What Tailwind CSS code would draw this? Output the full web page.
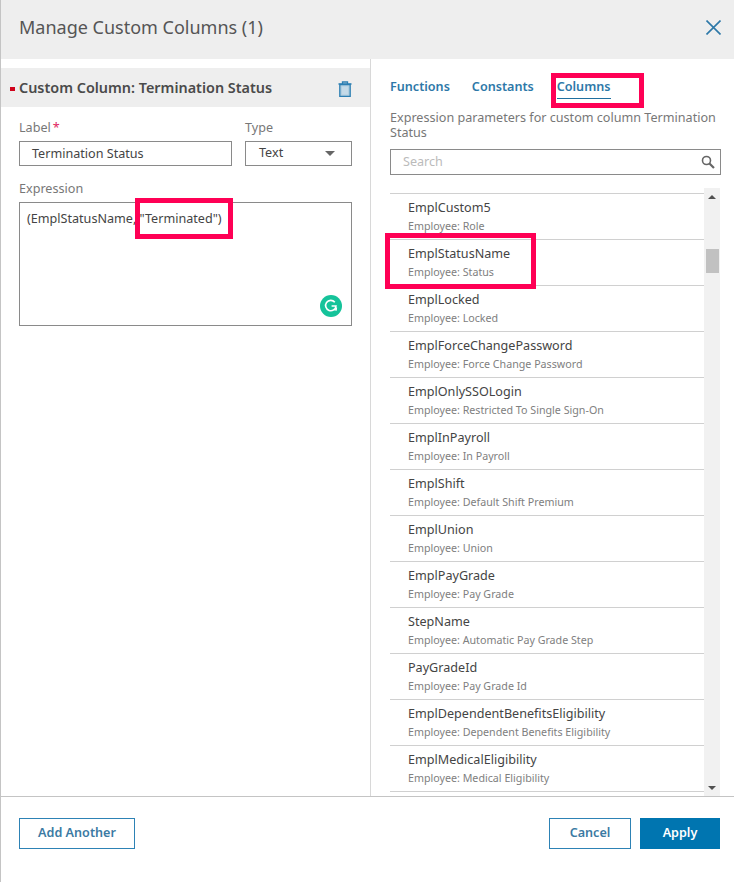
<!DOCTYPE html>
<html lang="en">
<head>
<meta charset="UTF-8" />
<title>Manage Custom Columns</title>
<script src="https://cdn.jsdelivr.net/npm/@tailwindcss/browser@4"></script>
</head>
<body class="bg-white">
<div class="relative w-[734px] h-[882px] overflow-hidden border-l border-[#c4c4c4] font-['Noto_Sans','Open_Sans',sans-serif] text-[#444]">

  <!-- header -->
  <div class="h-[59px] bg-[#eeeeee] flex items-center justify-between pl-[18px] pr-[13px]">
    <h1 class="text-[18px] leading-[24px] text-[#555] mb-[5px]">Manage Custom Columns (1)</h1>
    <svg class="w-[15px] h-[15px] mb-[4px]" viewBox="0 0 15 15" fill="none" stroke="#2d78a8" stroke-width="1.6"><path d="M.5.5l14 14M14.5.5l-14 14"/></svg>
  </div>

  <div class="flex h-[738px] border-b border-[#c4c4c4]">
    <!-- left panel -->
    <div class="w-[370px] shrink-0 border-r border-[#d8d8d8] pt-[9px]">
      <div class="relative h-[39px] bg-[#eeeeee] flex items-center justify-between pl-[18px] pr-[18px]">
        <span class="absolute left-[9px] top-[19px] w-[5px] h-[4px] bg-[#d0021b]"></span>
        <span class="text-[14.4px] font-semibold text-[#4a4a4a]">Custom Column: Termination Status</span>
        <svg class="w-[14px] h-[16px] mt-[3px]" viewBox="0 0 14 16" fill="none" stroke="#2d7fb3" stroke-width="1.3"><path d="M.5 3h13M4.5 3V1h5v2"/><path d="M1.8 3.5v11.8h10.4V3.5z" fill="#b3cfe0"/><path d="M5 5.5v8M7 5.5v8M9 5.5v8" stroke="#dbe8f0" stroke-width=".9"/></svg>
      </div>
      <div class="pl-[18px] pr-[18px]">
        <div class="flex gap-[13px] pt-[12px]">
          <div class="w-[213px]">
            <div class="text-[12.6px] leading-[18px] text-[#777] mb-[4px]">Label<span class="text-[#e0245e] ml-[2px]">*</span></div>
            <div class="h-[25px] border border-[#8a8a8a] pl-[12px] text-[12.6px] leading-[23px] text-[#444]">Termination Status</div>
          </div>
          <div class="w-[107px]">
            <div class="text-[12.6px] leading-[18px] text-[#777] mb-[4px]">Type</div>
            <div class="h-[25px] border border-[#8a8a8a] pl-[13px] pr-[16px] flex items-center justify-between text-[12.6px] text-[#444]">
              <span>Text</span>
              <span class="w-0 h-0 border-x-[5px] border-x-transparent border-t-[5px] border-t-[#666]"></span>
            </div>
          </div>
        </div>
        <div class="text-[12.6px] leading-[18px] text-[#777] mt-[14px] mb-[4px]">Expression</div>
        <div class="relative h-[124px] border border-[#8a8a8a] pl-[7px] pt-[6px] text-[12.6px] leading-[20px] text-[#444]">
          (EmplStatusName, "Terminated")
          <span class="absolute right-[9px] bottom-[8px] w-[22px] h-[22px] rounded-full bg-[#15c39a] flex items-center justify-center">
            <svg class="w-[14px] h-[14px]" viewBox="0 0 14 14" fill="none" stroke="#fff" stroke-width="1.6"><path d="M10.8 3.2A5.2 5.2 0 1 0 12 7H7.6"/><path d="M9.8 10.6l2.4.4.3-2.6" stroke-width="1.3"/></svg>
          </span>
        </div>
      </div>
    </div>

    <!-- right panel -->
    <div class="flex-1 min-w-0 pl-[19px] pr-[13px] flex flex-col">
      <div class="flex gap-[22px] pt-[19px] text-[12.6px] leading-[18px] font-semibold text-[#2d78a8]">
        <span>Functions</span>
        <span>Constants</span>
        <span class="ml-[1px] border-b border-[#1f6f9f] h-[21px]">Columns</span>
      </div>
      <p class="mt-[11px] text-[12.6px] leading-[15px] text-[#777]">Expression parameters for custom column Termination Status</p>
      <div class="mt-[9px] h-[26px] border border-[#8a8a8a] flex items-center justify-between pl-[12px] pr-[5px] text-[12.6px] text-[#bbb]">
        <span>Search</span>
        <svg class="w-[14px] h-[14px]" viewBox="0 0 14 14" fill="none" stroke="#666" stroke-width="1.6"><circle cx="5.5" cy="5.5" r="4"/><path d="M8.5 8.5l4.5 4.5" stroke-width="2.2"/></svg>
      </div>
      <div class="mt-[13px] flex-1 min-h-0 flex overflow-hidden pr-[1px]">
        <div class="flex-1 min-w-0 pt-[5px] overflow-hidden">
          <div class="border-t border-[#d0d0d0]">
            <div class="h-[46px] border-b border-[#d0d0d0] pl-[18px] pt-[5px]"><div class="text-[12.6px] leading-[18px] text-[#444]">EmplCustom5</div><div class="text-[10.7px] leading-[15px] mt-[2px] text-[#808080]">Employee: Role</div></div>
            <div class="h-[46px] border-b border-[#d0d0d0] pl-[18px] pt-[5px]"><div class="text-[12.6px] leading-[18px] text-[#444]">EmplStatusName</div><div class="text-[10.7px] leading-[15px] mt-[2px] text-[#808080]">Employee: Status</div></div>
            <div class="h-[46px] border-b border-[#d0d0d0] pl-[18px] pt-[5px]"><div class="text-[12.6px] leading-[18px] text-[#444]">EmplLocked</div><div class="text-[10.7px] leading-[15px] mt-[2px] text-[#808080]">Employee: Locked</div></div>
            <div class="h-[46px] border-b border-[#d0d0d0] pl-[18px] pt-[5px]"><div class="text-[12.6px] leading-[18px] text-[#444]">EmplForceChangePassword</div><div class="text-[10.7px] leading-[15px] mt-[2px] text-[#808080]">Employee: Force Change Password</div></div>
            <div class="h-[46px] border-b border-[#d0d0d0] pl-[18px] pt-[5px]"><div class="text-[12.6px] leading-[18px] text-[#444]">EmplOnlySSOLogin</div><div class="text-[10.7px] leading-[15px] mt-[2px] text-[#808080]">Employee: Restricted To Single Sign-On</div></div>
            <div class="h-[46px] border-b border-[#d0d0d0] pl-[18px] pt-[5px]"><div class="text-[12.6px] leading-[18px] text-[#444]">EmplInPayroll</div><div class="text-[10.7px] leading-[15px] mt-[2px] text-[#808080]">Employee: In Payroll</div></div>
            <div class="h-[46px] border-b border-[#d0d0d0] pl-[18px] pt-[5px]"><div class="text-[12.6px] leading-[18px] text-[#444]">EmplShift</div><div class="text-[10.7px] leading-[15px] mt-[2px] text-[#808080]">Employee: Default Shift Premium</div></div>
            <div class="h-[46px] border-b border-[#d0d0d0] pl-[18px] pt-[5px]"><div class="text-[12.6px] leading-[18px] text-[#444]">EmplUnion</div><div class="text-[10.7px] leading-[15px] mt-[2px] text-[#808080]">Employee: Union</div></div>
            <div class="h-[46px] border-b border-[#d0d0d0] pl-[18px] pt-[5px]"><div class="text-[12.6px] leading-[18px] text-[#444]">EmplPayGrade</div><div class="text-[10.7px] leading-[15px] mt-[2px] text-[#808080]">Employee: Pay Grade</div></div>
            <div class="h-[46px] border-b border-[#d0d0d0] pl-[18px] pt-[5px]"><div class="text-[12.6px] leading-[18px] text-[#444]">StepName</div><div class="text-[10.7px] leading-[15px] mt-[2px] text-[#808080]">Employee: Automatic Pay Grade Step</div></div>
            <div class="h-[46px] border-b border-[#d0d0d0] pl-[18px] pt-[5px]"><div class="text-[12.6px] leading-[18px] text-[#444]">PayGradeId</div><div class="text-[10.7px] leading-[15px] mt-[2px] text-[#808080]">Employee: Pay Grade Id</div></div>
            <div class="h-[46px] border-b border-[#d0d0d0] pl-[18px] pt-[5px]"><div class="text-[12.6px] leading-[18px] text-[#444]">EmplDependentBenefitsEligibility</div><div class="text-[10.7px] leading-[15px] mt-[2px] text-[#808080]">Employee: Dependent Benefits Eligibility</div></div>
            <div class="h-[46px] border-b border-[#d0d0d0] pl-[18px] pt-[5px]"><div class="text-[12.6px] leading-[18px] text-[#444]">EmplMedicalEligibility</div><div class="text-[10.7px] leading-[15px] mt-[2px] text-[#808080]">Employee: Medical Eligibility</div></div>
          </div>
        </div>
        <!-- scrollbar -->
        <div class="relative w-[16px] shrink-0 bg-[#f1f1f1]">
          <span class="absolute left-[4px] top-[7px] w-0 h-0 border-x-[4px] border-x-transparent border-b-[4px] border-b-[#505050]"></span>
          <span class="absolute left-[2px] top-[61px] w-[13px] h-[24px] bg-[#c1c1c1]"></span>
          <span class="absolute left-[4px] bottom-[6px] w-0 h-0 border-x-[4px] border-x-transparent border-t-[4px] border-t-[#505050]"></span>
        </div>
      </div>
    </div>
  </div>

  <!-- footer -->
  <div class="flex items-start justify-between pl-[18px] pr-[14px] pt-[21px]">
    <button class="w-[116px] h-[31px] border border-[#2d82b5] text-[12.6px] font-semibold text-[#3b7aa3]">Add Another</button>
    <div class="flex gap-[9px]">
      <button class="w-[82px] h-[31px] border border-[#2d82b5] text-[12.6px] font-semibold text-[#3b7aa3]">Cancel</button>
      <button class="w-[80px] h-[31px] bg-[#0075b0] text-[12.6px] font-semibold text-white">Apply</button>
    </div>
  </div>

  <!-- sliver of the page behind the dialog, on its left edge -->
  <div class="absolute -left-[1px] top-[158px] w-[1px] h-[25px] bg-[#5b93b5]"></div>

  <!-- pink annotation boxes over the screenshot -->
  <div class="absolute left-[134px] top-[198px] w-[98px] h-[41px] border-[5px] border-[#ff0055]"></div>
  <div class="absolute left-[550px] top-[73px] w-[93px] h-[35px] border-[5px] border-[#ff0055]"></div>
  <div class="absolute left-[384px] top-[233px] w-[151px] h-[56px] border-[5px] border-[#ff0055]"></div>
</div>
</body>
</html>
